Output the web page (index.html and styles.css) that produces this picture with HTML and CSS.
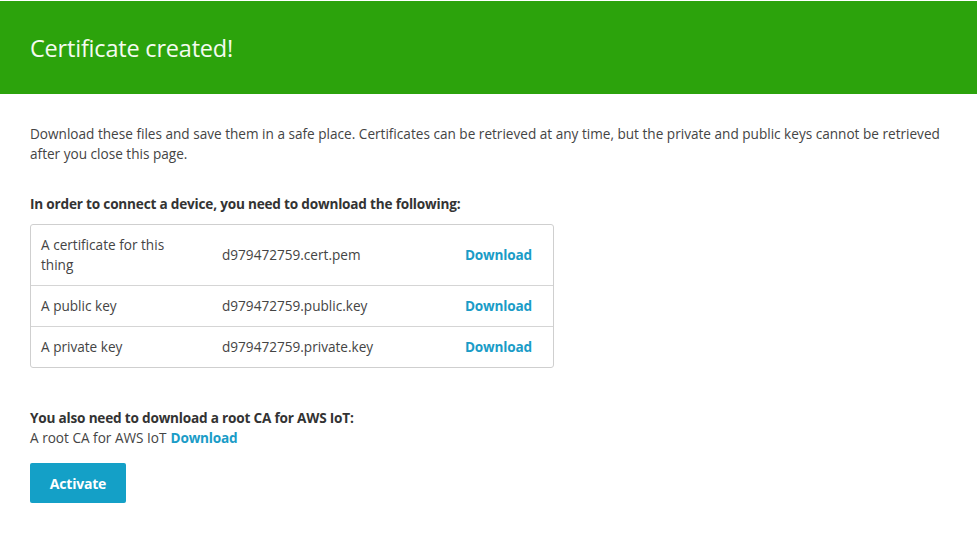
FILE: index.html
```html
<!DOCTYPE html>
<html>
<head>
<meta charset="utf-8">
<link rel="stylesheet" href="styles.css">
</head>
<body>
<header class="banner"><h1 class="title">Certificate created!</h1></header>
<main class="content">
  <p class="intro">Download these files and save them in a safe place. Certificates can be retrieved at any time, but the private and public keys cannot be retrieved after you close this page.</p>
  <p class="heading">In order to connect a device, you need to download the following:</p>
  <table class="files">
    <tr class="tall"><td class="c1">A certificate for this thing</td><td class="c2">d979472759.cert.pem</td><td class="c3"><a class="link">Download</a></td></tr>
    <tr><td class="c1">A public key</td><td class="c2">d979472759.public.key</td><td class="c3"><a class="link">Download</a></td></tr>
    <tr><td class="c1">A private key</td><td class="c2">d979472759.private.key</td><td class="c3"><a class="link">Download</a></td></tr>
  </table>
  <p class="heading root">You also need to download a root CA for AWS IoT:</p>
  <p class="rootline">A root CA for AWS IoT<a class="link gap">Download</a></p>
  <button class="btn">Activate</button>
</main>
</body>
</html>
```
FILE: styles.css
```css
html, body { margin: 0; padding: 0; background: #fff; }
body { font-family: "Open Sans", "Noto Sans", sans-serif; font-size: 13.6px; color: #444; line-height: 20px; }
.banner { background: #2ca30c; height: 93px; margin-top: 1px; display: flex; align-items: center; padding-left: 30px; }
.title { margin: 0; font-size: 23.5px; font-weight: 500; color: #f4fbf0; letter-spacing: -0.2px; }
.content { padding: 30px 30px 0 30px; }
.intro { margin: 0; }
.heading { margin: 30px 0 0; font-weight: 700; color: #333; letter-spacing: -0.2px; }
.files { margin-top: 10px; width: 524px; box-sizing: border-box; table-layout: fixed; border: 1px solid #cfcfcf; border-radius: 3px; border-collapse: separate; border-spacing: 0; }
.files td { box-sizing: border-box; padding: 10px 0; border-top: 1px solid #d5d5d5; vertical-align: middle; }
.files tr:first-child td { border-top: none; }
.files .tall td { height: 60px; }
.files td.c1 { padding-left: 10px; padding-right: 45px; width: 191px; }
.files td.c2 { width: 243px; }
.link { color: #1a9cc7; font-weight: 700; cursor: pointer; letter-spacing: -0.2px; }
.gap { margin-left: 4px; }
.root { margin-top: 40px; }
.rootline { margin: 0; }
.btn { margin-top: 15px; background: #14a0c7; color: #fff; border: none; border-radius: 2px; height: 40px; width: 96px; font-family: inherit; font-size: 14px; font-weight: 700; letter-spacing: -0.2px; }
```
